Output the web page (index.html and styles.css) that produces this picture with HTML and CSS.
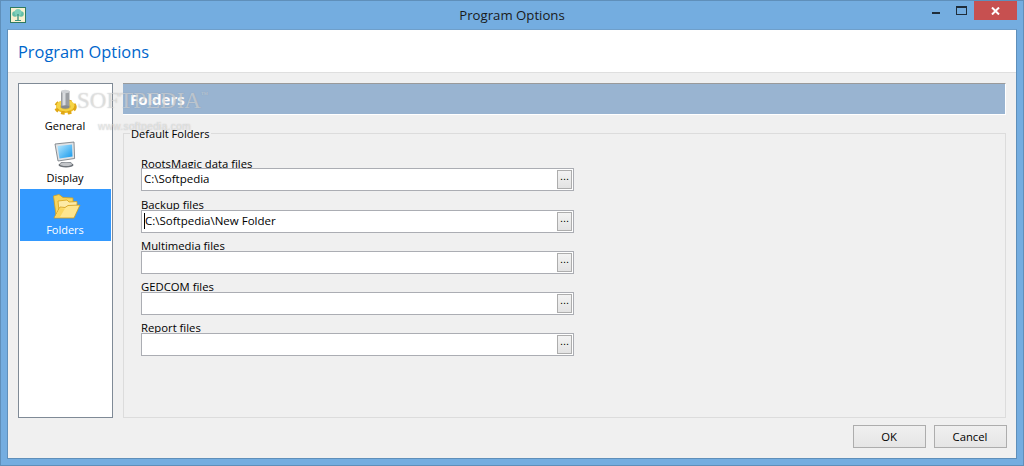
FILE: index.html
```html
<!DOCTYPE html>
<html lang="en">
<head>
<meta charset="utf-8">
<title>Program Options</title>
<link rel="stylesheet" href="styles.css">
</head>
<body>
<div class="window">
  <div class="titlebar">
    <div class="appicon">
      <svg width="14" height="14" viewBox="0 0 14 14"><rect width="14" height="14" fill="#f8f1cf"/><circle cx="4" cy="6" r="2.800" fill="#63bda6"/><circle cx="10" cy="6" r="2.800" fill="#63bda6"/><circle cx="7" cy="4.500" r="3.500" fill="#7fd0ba"/><path d="M6.300 6h1.400v6H6.300zM4 12h6v1H4z" fill="#3f9580"/></svg>
    </div>
    <div class="title">Program Options</div>
    <div class="controls">
      <div class="ctl"><span class="min"></span></div>
      <div class="ctl"><span class="max"></span></div>
      <div class="close">
        <svg width="9" height="8" viewBox="0 0 9 8"><path d="M1 0.500 8 7.500M8 0.500 1 7.500" stroke="#fff" stroke-width="2"/></svg>
      </div>
    </div>
  </div>
  <div class="client">
    <div class="header">Program Options</div>
    <div class="main">
      <div class="nav">
        <div class="navitem">
          <svg class="navicon" width="33" height="32" viewBox="0 0 33 32">
            <ellipse cx="16.500" cy="21" rx="9.500" ry="6" fill="#eebc22" stroke="#dfa716" stroke-width="3.500" stroke-dasharray="3.500 3"/>
            <ellipse cx="16.500" cy="19.500" rx="9" ry="5.500" fill="#f6d445"/>
            <ellipse cx="16.500" cy="20.500" rx="5.500" ry="3" fill="#b58a14" opacity=".3"/>
            <rect x="12" y="5" width="8.500" height="16" fill="#9a9ea3"/>
            <rect x="13.500" y="5" width="3" height="16" fill="#d9dcdf"/>
            <ellipse cx="16.250" cy="5.500" rx="4.250" ry="1.700" fill="#cfd2d6"/>
            <ellipse cx="16.250" cy="21" rx="4.250" ry="1.700" fill="#85898e"/>
          </svg>
          <span>General</span>
        </div>
        <div class="navitem">
          <svg class="navicon" width="33" height="32" viewBox="0 0 33 32">
            <defs><linearGradient id="scr" x1="0" y1="0" x2="1" y2="1"><stop offset="0" stop-color="#b8e8ff"/><stop offset="1" stop-color="#1298ec"/></linearGradient></defs>
            <path d="M12 24h10l1 2H11z" fill="#8c9197"/>
            <ellipse cx="17" cy="27" rx="7.500" ry="2.500" fill="#6d7278"/>
            <ellipse cx="17" cy="26.300" rx="6" ry="1.700" fill="#c2c5c9"/>
            <path d="M6 6 25 4l.6 16.500L9 23z" fill="#dfe2e5" stroke="#70767c" stroke-width=".8"/>
            <path d="M8.500 8 23 6.500l.5 12-13 2z" fill="url(#scr)"/>
          </svg>
          <span>Display</span>
        </div>
        <div class="navitem active">
          <svg class="navicon" width="33" height="32" viewBox="0 0 33 32">
            <path d="M4.500 6 10 4.500l4 3 10 .5v9L7 25z" fill="#f8d560" stroke="#d6a31c" stroke-width=".8"/>
            <path d="M9 11l9-1 2 2 8-.5V17l-18 4z" fill="#fdeaa6" stroke="#d6a31c" stroke-width=".8"/>
            <path d="M5 28 11 17l5 .5L19 15.500 31 15l-6 13z" fill="#ffe68f" stroke="#cf9a17" stroke-width=".8"/>
            <path d="M6 27l5-9 5 .5-5 8.500z" fill="#fad65f"/>
          </svg>
          <span>Folders</span>
        </div>
      </div>
      <div class="panel">
        <div class="panelhead">Folders</div>
        <fieldset class="group">
          <legend>Default Folders</legend>
          <div class="fields">
            <div class="field">
              <label>RootsMagic data files</label>
              <div class="input"><span class="value">C:\Softpedia</span><button class="dots" type="button">...</button></div>
            </div>
            <div class="field field-tall">
              <label>Backup files</label>
              <div class="input"><span class="value caret">C:\Softpedia\New Folder</span><button class="dots" type="button">...</button></div>
            </div>
            <div class="field">
              <label>Multimedia files</label>
              <div class="input"><span class="value"></span><button class="dots" type="button">...</button></div>
            </div>
            <div class="field">
              <label>GEDCOM files</label>
              <div class="input"><span class="value"></span><button class="dots" type="button">...</button></div>
            </div>
            <div class="field">
              <label>Report files</label>
              <div class="input"><span class="value"></span><button class="dots" type="button">...</button></div>
            </div>
          </div>
        </fieldset>
      </div>
    </div>
    <div class="footer">
      <button class="btn" type="button">OK</button>
      <button class="btn" type="button">Cancel</button>
    </div>
  </div>
  <div class="wm">SOFTPEDIA<sup>™</sup></div>
  <div class="wm-url">www.softpedia.com</div>
</div>
</body>
</html>
```
FILE: styles.css
```css
* { box-sizing: border-box; }
html, body { margin: 0; padding: 0; }
body { width: 1024px; height: 466px; overflow: hidden; font-family: "Open Sans", "Noto Sans", sans-serif; font-size: 11px; color: #000; }
.window { position: relative; width: 1024px; height: 466px; display: flex; flex-direction: column; background: #74ade0; border: 1px solid #5f8fba; padding: 0 6px 6px; }
.titlebar { height: 28px; flex: none; display: flex; align-items: flex-start; position: relative; }
.appicon { position: absolute; left: 3px; top: 6px; width: 16px; height: 16px; border: 1px solid #2f7a60; }
.appicon svg { display: block; }
.title { flex: 1; text-align: center; font-size: 13.2px; line-height: 28px; color: #1a1a1a; }
.controls { position: absolute; right: 0; top: 0; display: flex; align-items: flex-start; }
.ctl { width: 25px; height: 19px; position: relative; }
.min { position: absolute; left: 8px; top: 11px; width: 8px; height: 2px; background: #1f2d3a; }
.max { position: absolute; left: 7px; top: 5px; width: 11px; height: 9px; border: 1px solid #1f2d3a; border-top-width: 2px; }
.close { width: 43px; height: 19px; background: #c75050; display: flex; align-items: center; justify-content: center; }
.client { flex: 1; display: flex; flex-direction: column; background: #f0f0f0; border: 1px solid #5f8fba; border-top-color: #6f9fca; min-height: 0; }
.header { height: 43px; flex: none; background: #fff; border-bottom: 1px solid #dfdfdf; color: #0066cc; font-size: 16.4px; line-height: 44px; padding-left: 10px; }
.main { flex: 1; display: flex; gap: 10px; padding: 10px 10px 0 10px; min-height: 0; }
.nav { width: 95px; height: 335px; flex: none; background: #fff; border: 1px solid #7f8a96; padding: 1px; display: flex; flex-direction: column; }
.navitem { height: 52px; display: flex; flex-direction: column; align-items: center; font-size: 11px; line-height: 14px; color: #000; }
.navicon { display: block; margin-top: 1px; margin-bottom: 1px; flex: none; }
.navitem span { display: block; margin-right: 1px; }
.navitem.active { background: #3399ff; color: #fff; }
.panel { flex: 1; display: flex; flex-direction: column; min-width: 0; height: 335px; }
.panelhead { height: 32px; flex: none; background: #99b4d1; border-top: 1px solid #9a9a9a; border-bottom: 1px solid #fff; border-right: 1px solid #fff; color: #fff; font-size: 15px; font-weight: 700; line-height: 30px; padding-left: 7px; }
.group { flex: 1; margin: 11px 0 0; border: 1px solid #dcdcdc; padding: 0 0 0 17px; min-width: 0; }
.group legend { padding: 0 1px; margin-left: -11px; line-height: 15px; font-size: 11.1px; }
.fields { display: flex; flex-direction: column; padding-top: 8px; }
.field { display: flex; flex-direction: column; justify-content: flex-end; width: 433px; height: 41px; }
.field:first-child { height: 42px; }
.field-tall { height: 42px; }
.field label { line-height: 12px; height: 12px; flex: none; font-size: 11.3px; margin-bottom: -1px; white-space: nowrap; }
.field:first-child label { margin-bottom: -2px; }
.input { position: relative; height: 23px; flex: none; background: #fff; border: 1px solid #abadb3; display: flex; align-items: center; justify-content: space-between; padding-right: 1px; }
.value { padding-left: 2px; padding-bottom: 2px; font-size: 11.5px; line-height: 16px; }
.caret { border-left: 1px solid #000; margin-left: 2px; padding-left: 0; padding-bottom: 0; margin-top: -2px; }
.dots { width: 15px; height: 19px; padding: 0 0 8px; border: 1px solid #adadad; background: linear-gradient(#f3f3f3, #e3e3e3); font-family: "Liberation Sans", sans-serif; font-size: 11px; line-height: 11px; color: #000; }
.footer { height: 40px; flex: none; display: flex; justify-content: flex-end; gap: 8px; padding: 7px 9px 0 0; align-items: flex-start; }
.btn { width: 73px; height: 23px; padding: 0 1px 0 0; border: 1px solid #adadad; background: linear-gradient(#f0f0f0, #e5e5e5); font-family: "Open Sans", "Noto Sans", sans-serif; font-size: 11.3px; color: #000; }
.wm { position: absolute; left: 76px; top: 87px; font-family: "Liberation Serif", serif; font-size: 23px; line-height: 26px; white-space: nowrap; color: rgba(255,255,255,.42); text-shadow: 0 0 1px rgba(130,130,130,.5); pointer-events: none; }
.wm sup { font-size: 7px; vertical-align: 11px; line-height: 0; }
.wm-url { position: absolute; left: 97px; top: 120px; font-family: "Liberation Sans", sans-serif; font-size: 10px; line-height: 12px; white-space: nowrap; letter-spacing: .4px; color: rgba(255,255,255,.55); text-shadow: 0 0 1px rgba(110,110,110,.5); pointer-events: none; }
```
